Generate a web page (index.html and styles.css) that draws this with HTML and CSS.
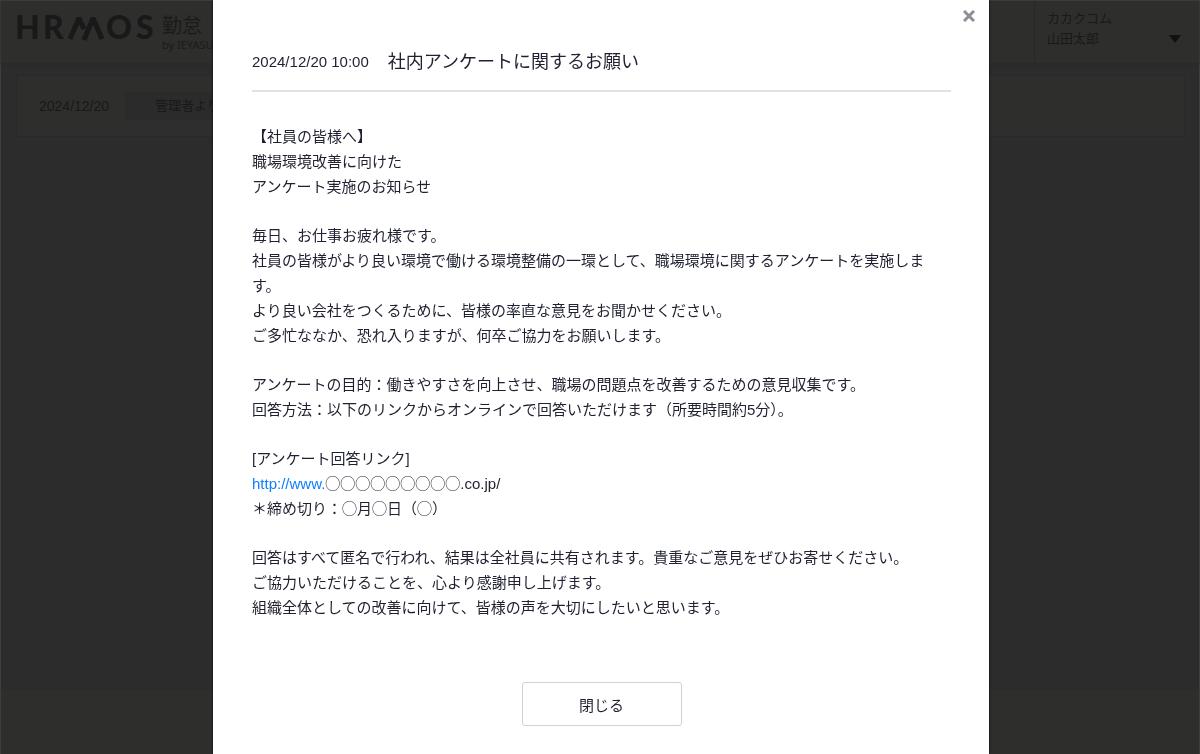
FILE: index.html
```html
<!DOCTYPE html>
<html lang="ja">
<head>
    <meta charset="UTF-8">
    <meta name="viewport" content="width=device-width, initial-scale=1.0">
    <title>HRMOS勤怠</title>
    <link rel="stylesheet" href="styles.css">
</head>
<body>
    <!-- Page behind the dialog -->
    <div class="page">
        <header class="header">
            <div class="brand">
                <svg class="logo" viewBox="0 0 144 46" width="144" height="46" role="img" aria-label="HRMOS">
                    <g class="logo-text">
                        <text x="1" y="35">H</text>
                        <text x="29" y="35">R</text>
                        <text x="92" y="35">O</text>
                        <text x="122" y="35">S</text>
                    </g>
                    <g class="logo-mark">
                        <path d="M56 35 L65 14 L70 25"/>
                        <path d="M70 36 L79 14 L88 35"/>
                    </g>
                </svg>
                <div class="product">
                    <span class="product-name">勤怠</span>
                    <span class="product-by">by IEYASU</span>
                </div>
            </div>
            <button class="user" type="button">
                <span class="user-name">カカクコム<br>山田太郎</span>
                <svg class="caret" viewBox="0 0 12 8" width="12" height="8"><path d="M0 0H12L6 8Z"/></svg>
            </button>
        </header>
        <main class="main">
            <div class="notice">
                <span class="notice-date">2024/12/20</span>
                <span class="notice-label">管理者より</span>
            </div>
        </main>
        <footer class="footer"></footer>
    </div>

    <!-- Notice dialog -->
    <div class="overlay">
        <div class="modal" role="dialog" aria-labelledby="modal-title">
            <button class="modal-x" type="button" aria-label="閉じる">
                <svg viewBox="0 0 12 12" width="12" height="12"><path d="M1 1L11 11M11 1L1 11"/></svg>
            </button>
            <div class="modal-header">
                <span class="modal-date">2024/12/20 10:00</span>
                <h1 class="modal-title" id="modal-title">社内アンケートに関するお願い</h1>
            </div>
            <div class="modal-body">
                <p>【社員の皆様へ】<br>
                職場環境改善に向けた<br>
                アンケート実施のお知らせ</p>
                <p>毎日、お仕事お疲れ様です。<br>
                社員の皆様がより良い環境で働ける環境整備の一環として、職場環境に関するアンケートを実施します。<br>
                より良い会社をつくるために、皆様の率直な意見をお聞かせください。<br>
                ご多忙ななか、恐れ入りますが、何卒ご協力をお願いします。</p>
                <p>アンケートの目的：働きやすさを向上させ、職場の問題点を改善するための意見収集です。<br>
                回答方法：以下のリンクからオンラインで回答いただけます（所要時間約5分）。</p>
                <p>[アンケート回答リンク]<br>
                <a href="#">http://www.</a>◯◯◯◯◯◯◯◯◯.co.jp/<br>
                ＊締め切り：◯月◯日（◯）</p>
                <p>回答はすべて匿名で行われ、結果は全社員に共有されます。貴重なご意見をぜひお寄せください。<br>
                ご協力いただけることを、心より感謝申し上げます。<br>
                組織全体としての改善に向けて、皆様の声を大切にしたいと思います。</p>
            </div>
            <button class="modal-close" type="button">閉じる</button>
        </div>
    </div>
</body>
</html>
```
FILE: styles.css
```css
* {
    box-sizing: border-box;
}

body {
    margin: 0;
    font-family: "Liberation Sans", "Noto Sans CJK JP", sans-serif;
    background-color: #2c2c2c;
    color: #191919;
}

button {
    font-family: inherit;
    cursor: pointer;
}

/* Dimmed page */
.page {
    display: flex;
    flex-direction: column;
    height: 100vh;
    border: 1px solid #3e3e3d;
    border-bottom: 0;
}

.header {
    display: flex;
    justify-content: space-between;
    height: 62px;
    background-color: #2e2e2c;
    box-shadow: 0 1px 2px #292929;
}

.brand {
    display: flex;
    align-items: flex-start;
    gap: 4px;
    padding: 3px 0 0 13px;
}

.logo-text {
    font-family: Lato, sans-serif;
    font-size: 32px;
    font-weight: 900;
    fill: #191919;
}

.logo-mark {
    fill: none;
    stroke: #191919;
    stroke-width: 5;
    stroke-linejoin: bevel;
}

.product {
    display: flex;
    flex-direction: column;
    padding-top: 11px;
    color: #1b1b1b;
}

.product-name {
    font-size: 20px;
    line-height: 22px;
}

.product-by {
    font-family: "Noto Sans", sans-serif;
    font-size: 11px;
    line-height: 16px;
}

.user {
    display: flex;
    justify-content: space-between;
    width: 165px;
    padding: 8px 18px 0 12px;
    border: 0;
    border-left: 1px solid #282828;
    background: none;
    color: #191919;
    text-align: left;
}

.user-name {
    font-size: 13px;
    line-height: 20px;
}

.caret {
    margin-top: 26px;
    fill: #111;
}

.main {
    flex: 1;
    padding: 12px 14px 12px 15px;
}

.notice {
    display: flex;
    align-items: center;
    gap: 16px;
    height: 62px;
    padding: 0 22px;
    border: 1px solid #292929;
    background-color: #2e2e2c;
}

.notice-date {
    font-size: 14px;
}

.notice-label {
    padding: 0 30px;
    background-color: #2b2b2b;
    font-size: 13px;
    line-height: 28px;
}

.footer {
    height: 64px;
    background-color: #2e2e2c;
}

/* Dialog */
.overlay {
    position: fixed;
    inset: 0;
    display: flex;
    justify-content: center;
    padding-left: 2px;
    overflow: hidden;
}

.modal {
    position: relative;
    display: flex;
    flex-direction: column;
    width: 100%;
    max-width: 776px;
    padding: 49px 38px 28px 39px;
    background-color: #fff;
    box-shadow: 0 0 2px #000;
    color: #1f2130;
}

.modal-x {
    position: absolute;
    top: 10px;
    right: 14px;
    display: flex;
    padding: 0;
    border: 0;
    background: none;
}

.modal-x path {
    stroke: #8c8e94;
    stroke-width: 3;
}

.modal-header {
    display: flex;
    align-items: center;
    gap: 19px;
    padding-bottom: 15px;
    border-bottom: 2px solid #dfe3e9;
    line-height: 26px;
}

.modal-date {
    font-size: 15px;
}

.modal-title {
    margin: 0;
    font-size: 18px;
    font-weight: normal;
}

.modal-body {
    margin: 32px 0 62px;
    font-size: 15px;
    line-height: 25px;
}

.modal-body p {
    margin: 0 0 24px;
}

.modal-body p:last-child {
    margin-bottom: 0;
}

.modal-body a {
    color: #0d7fff;
    text-decoration: none;
}

.modal-close {
    align-self: center;
    width: 160px;
    height: 44px;
    border: 1px solid #ccd3da;
    border-radius: 3px;
    background-color: #fff;
    color: #1f2130;
    font-size: 15px;
}
```
